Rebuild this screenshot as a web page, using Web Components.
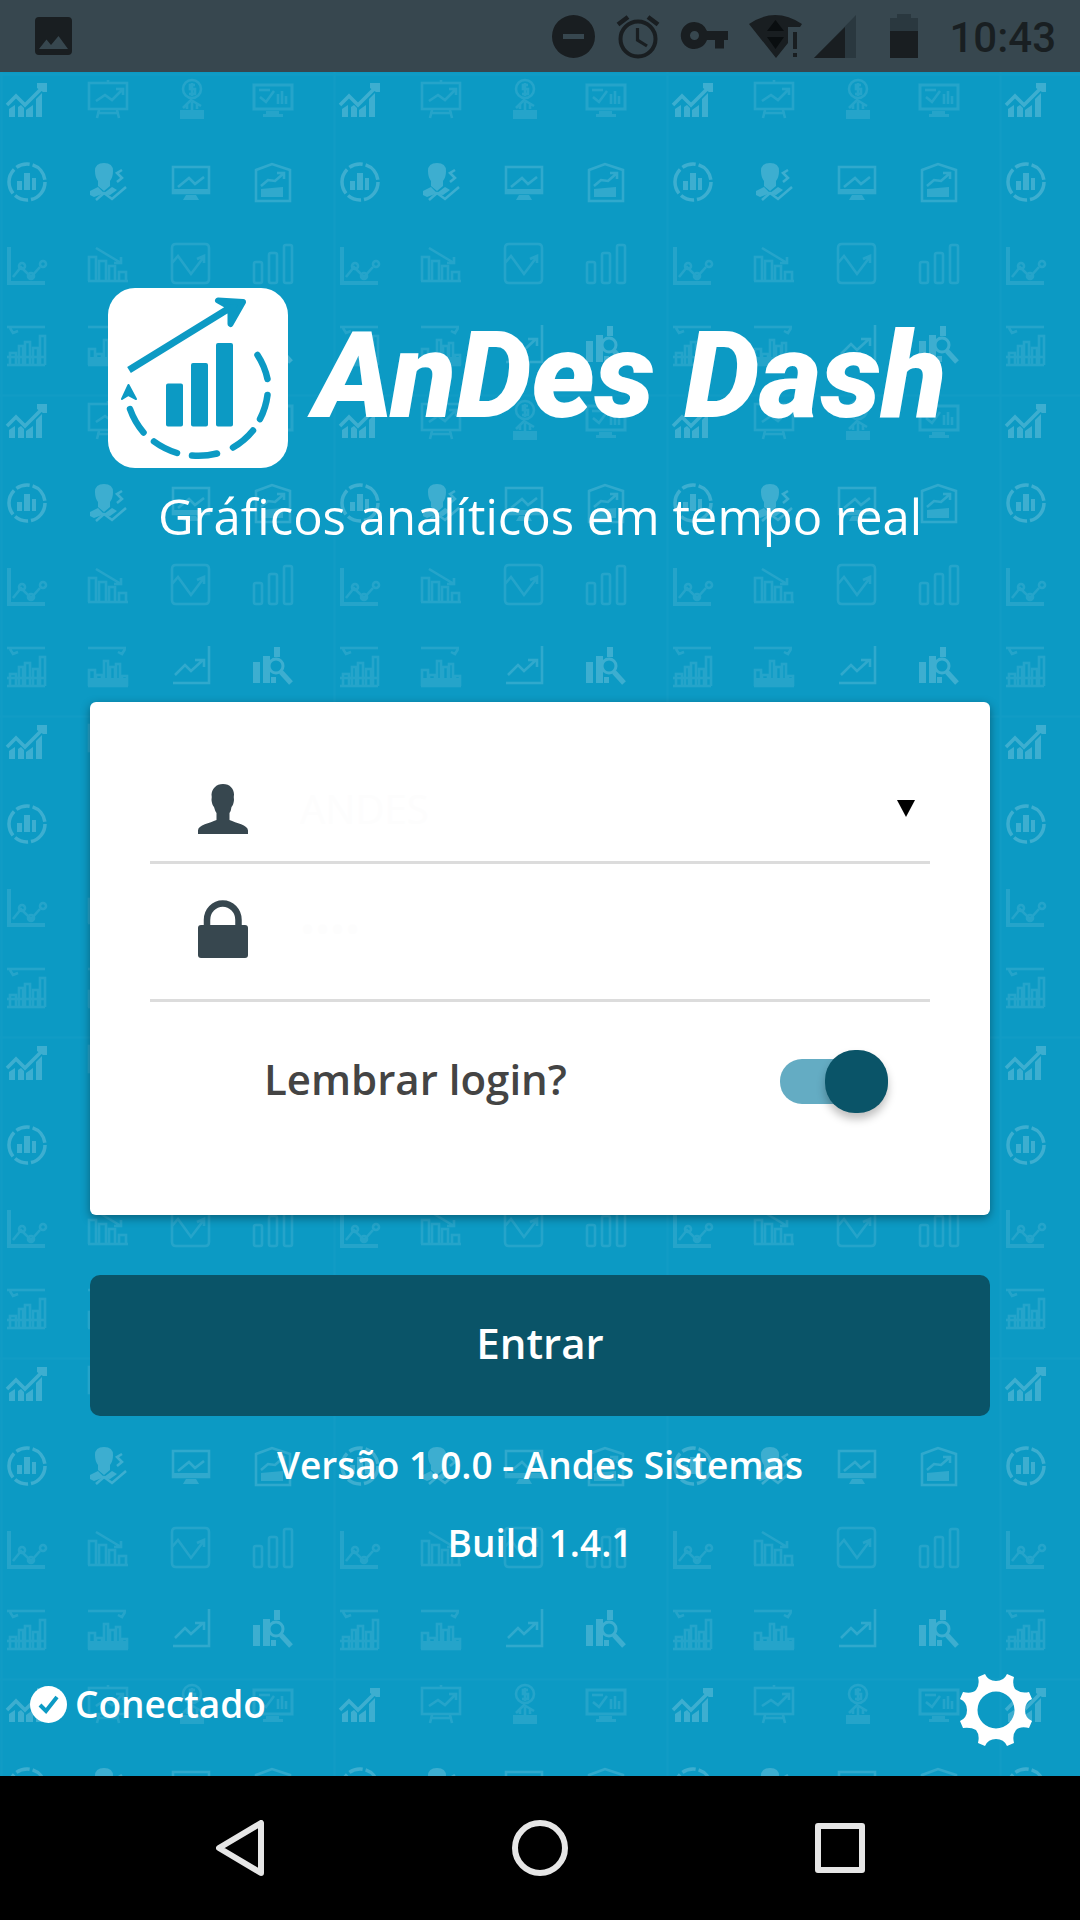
<!DOCTYPE html>
<html lang="pt-BR">
<head>
<meta charset="utf-8">
<meta name="viewport" content="width=device-width, initial-scale=1">
<title>AnDes Dash</title>
<style>
  body {
    margin: 0;
    min-height: 100vh;
    display: flex;
    flex-direction: column;
    font-family: "Open Sans", "Noto Sans", sans-serif;
    color: #fff;
    --brand: #0c9ac4;
    --deep: #0a5468;
    --slate: #37474f;
    --rule: #dcdcdc;
  }
</style>
</head>
<body>
<status-bar time="10:43"></status-bar>
<app-stage>
  <brand-header name="AnDes Dash">Gráficos analíticos em tempo real</brand-header>
  <login-form></login-form>
  <version-info>
    <span>Versão 1.0.0 - Andes Sistemas</span>
    <span>Build 1.4.1</span>
  </version-info>
  <app-footer>Conectado</app-footer>
</app-stage>
<nav-bar></nav-bar>

<script>
class Base extends HTMLElement {
  constructor() {
    super();
    this.attachShadow({ mode: 'open' });
  }
  connectedCallback() {
    this.shadowRoot.innerHTML = '<style>*{box-sizing:border-box}svg{display:block;flex:none}</style>' + this.render();
  }
}

customElements.define('status-bar', class extends Base {
  render() {
    return `
<style>
  :host { display: flex; align-items: center; justify-content: space-between; height: 72px; padding: 0 24px 0 35px; background: var(--slate); color: #191f22; }
  .icons { display: flex; align-items: center; gap: 21px; }
  svg { fill: #191e21; overflow: visible; }
  time { padding-top: 4px; font: 500 42px/68px Roboto, sans-serif; }
</style>
<svg width="37" height="38" viewBox="0 0 37 38"><path fill-rule="evenodd" d="M4 0H33a4 4 0 0 1 4 4V34a4 4 0 0 1-4 4H4a4 4 0 0 1-4-4V4a4 4 0 0 1 4-4ZM4 32H33L23.500 19L16 28L11.500 22.500Z"/></svg>
<div class="icons">
  <svg width="43" height="43" viewBox="0 0 43 43"><path fill-rule="evenodd" d="M21.500 0a21.500 21.500 0 1 0 0 43a21.500 21.500 0 1 0 0-43ZM11 19V24H32V19Z"/></svg>
  <svg width="44" height="43" viewBox="0 0 44 43"><g fill="none" stroke="#191e21"><circle cx="22" cy="24" r="17.500" stroke-width="4"/><path stroke-width="4.500" d="M2 9.500L12 2M42 9.500L32 2"/><path stroke-width="3.200" d="M21.500 13V25L31 31"/></g></svg>
  <svg width="47" height="28" viewBox="0 0 47 28"><path fill-rule="evenodd" d="M13.500 0A13.500 13.500 0 0 1 26 9H47V18H43V26.500H34V18H26A13.500 13.500 0 1 1 13.500 0ZM13.500 9a4.500 4.500 0 1 0 0 9a4.500 4.500 0 1 0 0-9Z"/></svg>
  <svg width="44" height="43" viewBox="0 0 44 43"><path d="M0 9Q26-9 53 9L51 12H39V28L27 43Z"/><path fill="#0a0e10" d="M18 16H35L26.500 5ZM18 22H35L26.500 34Z"/><path d="M44 17H48V34H44ZM44 38H48V42H44Z"/></svg>
  <svg width="42" height="43" viewBox="0 0 42 43"><path fill="#2a383f" d="M42 0V43H0Z"/><path d="M31 12V43H0Z"/></svg>
  <svg width="51" height="44" viewBox="0 0 51 44"><path fill="#2a383f" d="M13 4H20V0H34V4H41V18H13Z"/><path d="M13 17H41V44H13Z"/></svg>
  <time>${this.getAttribute('time')}</time>
</div>`;
  }
});

customElements.define('app-stage', class extends Base {
  render() {
    return `
<style>
  :host { flex: 1; display: grid; grid-template-rows: 1fr; background: var(--brand); }
  .paper, .content { grid-area: 1 / 1; }
  .paper { width: 100%; height: 100%; contain: size; }
  .content { display: flex; flex-direction: column; position: relative; padding: 216px 0 30px; }
  .paper g g { fill: none; stroke: #fff; stroke-width: 2.500; }
  .paper .f { fill: #fff; stroke: none; }
</style>
<svg class="paper" aria-hidden="true">
  <defs>
    <pattern id="charts" width="333" height="321" patternUnits="userSpaceOnUse">
      <path d="M1.500 0V321M0 2.500H333" stroke="#fff" stroke-width="2" opacity=".02"/>
      <g opacity=".2">
        <g transform="translate(7 8)"><path stroke-width="3.500" d="M0 25L9 16L18 25L34 9"/><path class="f" d="M30 3H40V12H36L30 8ZM2 29L8 25V37H2ZM11 27L14 25L17 28V37H11ZM19 30L26 25V37H19ZM29 19L35 13V37H29Z"/></g>
        <g transform="translate(7 90)"><circle cx="20" cy="20" r="18" stroke-width="3.500" stroke-dasharray="24 3 14 3 26 3 14 3 20 3"/><path class="f" d="M17 11H23V28H17ZM10 19H15V28H10ZM25 16H29V28H25Z"/></g>
        <g transform="translate(88 90)"><path class="f" d="M7 9Q7 1 16 1T25 9Q25 15 22 19V24L16 29L10 24V19Q7 15 7 9ZM2 29L10 25L16 31L24 25L29 28L22 33L14 32L6 35L2 33Z"/><path d="M34 8L29 11L34 16L29 20M8 38L16 31L24 37L38 25" stroke-width="2.500"/></g>
        <g transform="translate(252 252)"><path class="f" d="M1 17H8V38H1ZM11 11H18V38H11ZM22 2H28V12H22ZM19 32H24V38H19Z"/><circle cx="24" cy="21" r="7" stroke-width="3"/><path d="M29 27L39 38" stroke-width="5"/></g>
      </g>
      <g opacity=".15">
        <g transform="translate(171 90)"><path d="M2 5H38V31H2ZM7 25L18 16L24 22L33 15" /><path class="f" d="M2 27H38V32H2ZM15 33H25L28 38H12Z"/></g>
        <g transform="translate(252 90)"><path d="M4 8L20 2L38 8V39H4ZM9 24L16 18L23 19L31 12M25 11H32V17"/><path class="f" d="M9 27L31 25V35H9Z"/></g>
        <g transform="translate(171 252)"><path d="M2 38H38V1M4 30L14 20L20 26L32 15M24 15H33V22"/></g>
      </g>
      <g opacity=".1">
        <g transform="translate(171 171)"><path d="M5 1H34Q38 1 38 5V36Q38 40 34 40H5Q1 40 1 36V5Q1 1 5 1ZM1 20L7 13L20 31L32 15M26 16L33 13V20"/></g>
        <g transform="translate(252 8)"><path d="M2 5H40V29H2Z" stroke-width="3"/><path d="M7 10H18M8 17L14 22L22 11M26 24V14M30 24V11M34 24V16"/><path class="f" d="M14 31H27V34H31V37H11V34H14Z"/></g>
        <g transform="translate(7 252)"><path d="M0 3H38M3 4L6 9L11 7M0 41H38M0 33H38M3 41V29H9V41M12 41V22H16V41M18 41V18H23V41M26 41V24H31V41M33 41V12H38V41"/></g>
        <g transform="translate(88 8)"><path d="M1 3H39V29H1ZM8 21L17 15L24 20L34 10M28 9H35V15M11 30L9 38M29 30L31 38M9 33H31M20 0V3" /></g>
        <g transform="translate(171 8)"><circle cx="21" cy="9" r="9"/><path d="M24 5H19V9H24V14H18M21 3V16M12 28L20 20L30 26M16 24V29M21 22V30M26 23V29"/><path class="f" d="M9 30H33V39H9Z"/></g>
        <g transform="translate(7 171)"><path stroke-width="4" d="M2 4V40H38"/><path d="M6 34L14 24L24 34L33 24"/><circle cx="15" cy="23" r="3"/><circle cx="24" cy="33" r="3"/><circle cx="36" cy="21" r="3"/></g>
        <g transform="translate(88 171)"><path d="M0 38H40M1 38V14H8V38M11 38V18H18V38M21 38V23H27V38M31 38V29H38V38M8 5L33 20M33 14V20H26"/></g>
        <g transform="translate(252 171)"><rect x="2" y="19" width="8" height="21" rx="2"/><rect x="17" y="10" width="8" height="30" rx="2"/><rect x="32" y="2" width="8" height="38" rx="2"/></g>
        <g transform="translate(88 252)"><path d="M0 3H38M37 4L34 9L30 7M0 41H40M1 41V25H7V41M8 41V30H14V41M16 41V16H20V41M22 41V22H27V41M28 41V19H32V41M34 41V31H39V41"/><path class="f" d="M2 33H39V41H2Z"/></g>
      </g>
    </pattern>
  </defs>
  <rect width="100%" height="100%" fill="url(#charts)"/>
</svg>
<main class="content"><slot></slot></main>`;
  }
});

customElements.define('brand-header', class extends Base {
  render() {
    return `
<style>
  :host { display: block; text-align: center; }
  .logo { display: flex; align-items: flex-start; gap: 26px; padding: 0 108px; }
  h1 { margin: 0; font: italic 900 120px/176px Roboto, sans-serif; white-space: nowrap; }
  p { margin: 0; font-size: 49px; line-height: 96px; }
</style>
<div class="logo">
  <svg width="180" height="180" viewBox="0 0 180 180">
    <rect width="180" height="180" rx="27" fill="#fff"/>
    <g fill="#0c9ac4" stroke="#0c9ac4" stroke-linejoin="round">
      <path fill="none" stroke-width="7" d="M21 82L120 21"/>
      <path stroke-width="6" d="M110 12.500L135 14L122.500 36V25L118 17Z"/>
      <path stroke-width="2" d="M20.500 97L28 111L20.500 107L14 111Z"/>
      <path stroke="none" d="M60 95.500H73a2 2 0 0 1 2 2V136.500a2 2 0 0 1-2 2H60a2 2 0 0 1-2-2V97.500a2 2 0 0 1 2-2ZM85 75H98a2 2 0 0 1 2 2V136.500a2 2 0 0 1-2 2H85a2 2 0 0 1-2-2V77a2 2 0 0 1 2-2ZM110 55H123a2 2 0 0 1 2 2V136.500a2 2 0 0 1-2 2H110a2 2 0 0 1-2-2V57a2 2 0 0 1 2-2Z"/>
      <g fill="none" stroke-width="6.500" stroke-linecap="round"><path d="M149.500 67A71 71 0 0 1 159.500 91M159.500 107A71 71 0 0 1 152 131M145 142.500A71 71 0 0 1 125 159.500M109 165.500A76 76 0 0 1 84 167.500M69 165A76 76 0 0 1 46 153.500M35.500 144.500A76 76 0 0 1 22 121"/></g>
    </g>
  </svg>
  <h1>${this.getAttribute('name')}</h1>
</div>
<p><slot></slot></p>`;
  }
});

customElements.define('field-row', class extends Base {
  render() {
    return `
<style>
  :host { display: flex; align-items: center; gap: 52px; height: 138px; padding: 0 15px 6px 48px; border-bottom: 3px solid var(--rule); }
  :host([first]) { height: 108px; padding-bottom: 0; }
  ::slotted(select), ::slotted(input) { flex: 1; min-width: 0; width: 100%; border: 0; outline: 0; background: none; appearance: none; margin: 0; padding: 0; font: inherit; font-size: 40px; color: #fdfdfd; }
</style>
<slot name="icon"></slot><slot></slot><slot name="end"></slot>`;
  }
});

customElements.define('toggle-switch', class extends Base {
  render() {
    return `
<style>
  :host { display: flex; align-items: center; justify-content: space-between; height: 159px; padding: 0 42px 0 114px; color: #444; }
  label { padding-bottom: 6px; font-size: 42px; font-weight: 600; }
  input { appearance: none; display: flex; align-items: center; justify-content: flex-end; width: 108px; height: 45px; margin: 0; border-radius: 22px; background: #64acc3; }
  input::before { content: ""; width: 63px; height: 63px; flex: none; border-radius: 30px; background: var(--deep); box-shadow: 0 6px 9px rgba(0,0,0,.25); }
</style>
<label for="remember">${this.getAttribute('label')}</label>
<input id="remember" type="checkbox" role="switch" checked>`;
  }
});

customElements.define('login-form', class extends Base {
  render() {
    return `
<style>
  :host { display: block; padding: 138px 90px 0; }
  form { display: flex; flex-direction: column; gap: 60px; margin: 0; }
  .card { background: #fff; border-radius: 6px; padding: 54px 60px; box-shadow: 0 3px 10px rgba(0,0,0,.38); }
  button { height: 141px; padding: 0 0 6px; border: 0; border-radius: 10px; background: var(--deep); color: #fff; font: inherit; font-size: 42px; font-weight: 600; }
</style>
<form>
  <div class="card">
    <field-row first>
      <label slot="icon" for="user" aria-label="Usuário"><svg width="50" height="50" viewBox="0 0 50 50"><path fill="#37474f" d="M25 0C32 0 36 5 36 10.500Q35.500 13 36 16Q35.500 21 33.500 23Q33 27 31.500 29V36C38 39 50 41 50 46.500V50H0V46.500C0 41 12 39 18.500 36V29Q17 27 16 23Q14 21 13.500 16Q14 13 13.500 10.500C14 5 18 0 25 0Z"/></svg></label>
      <select id="user"><option>ANDES</option></select>
      <svg slot="end" width="18" height="17" viewBox="0 0 18 17"><path d="M0 0H18L9 17Z"/></svg>
    </field-row>
    <field-row>
      <label slot="icon" for="pass" aria-label="Senha"><svg width="50" height="58" viewBox="0 0 50 58"><path fill="none" stroke="#37474f" stroke-width="6.500" d="M9 27V20A15.750 16.500 0 0 1 40.500 20V27"/><rect y="25" width="50" height="33" rx="3" fill="#37474f"/></svg></label>
      <input id="pass" type="password" value="1234">
    </field-row>
    <toggle-switch label="Lembrar login?"></toggle-switch>
  </div>
  <button type="button">Entrar</button>
</form>`;
  }
});

customElements.define('version-info', class extends Base {
  render() {
    return `
<style>
  :host { display: flex; flex-direction: column; align-items: center; padding-top: 10px; font-size: 37px; font-weight: 600; line-height: 78px; }
</style>
<slot></slot>`;
  }
});

customElements.define('app-footer', class extends Base {
  render() {
    return `
<style>
  :host { display: flex; justify-content: space-between; margin-top: auto; padding: 0 48px 0 30px; font-size: 37px; font-weight: 600; line-height: 60px; }
  div { display: flex; align-items: center; gap: 8px; height: 60px; }
  button { border: 0; padding: 0; background: none; }
</style>
<div><svg width="37" height="37" viewBox="0 0 37 37"><circle cx="18.500" cy="18.500" r="18.500" fill="#fff"/><path fill="none" stroke="#0c9ac4" stroke-width="4" d="M10 19L16 25L27 11"/></svg><span><slot></slot></span></div>
<button type="button" aria-label="Configurações"><svg width="72" height="72" viewBox="0 0 72 72"><path fill="#fff" fill-rule="evenodd" d="M18 3L25 0Q28 7 36 7T47 0L54 3Q52 10 55 15Q61 20 69 18L72 25Q65 28 65 36T72 47L69 54Q60 52 56 56Q52 61 54 69L47 72Q44 65 36 65T25 72L18 69Q20 61 16 56Q11 53 3 54L0 47Q7 44 7 36T0 25L3 18Q12 20 16 16Q20 11 18 3ZM36 17.500a18.500 18.500 0 1 0 0 37a18.500 18.500 0 1 0 0-37Z"/></svg></button>`;
  }
});

customElements.define('nav-bar', class extends Base {
  render() {
    return `
<style>
  :host { display: grid; grid-template-columns: repeat(3, 1fr); height: 144px; padding: 0 90px; background: #000; }
  button { display: flex; align-items: center; justify-content: center; border: 0; padding: 0; background: none; }
  svg { fill: none; stroke: #e6e6e6; stroke-width: 6; stroke-linejoin: round; }
</style>
<button type="button" aria-label="Voltar"><svg width="48" height="56" viewBox="0 0 48 56"><path d="M45 3V53L3 28Z"/></svg></button>
<button type="button" aria-label="Início"><svg width="56" height="56" viewBox="0 0 56 56"><circle cx="28" cy="28" r="25"/></svg></button>
<button type="button" aria-label="Recentes"><svg width="50" height="50" viewBox="0 0 50 50"><rect x="3" y="3" width="44" height="44"/></svg></button>`;
  }
});
</script>
</body>
</html>
